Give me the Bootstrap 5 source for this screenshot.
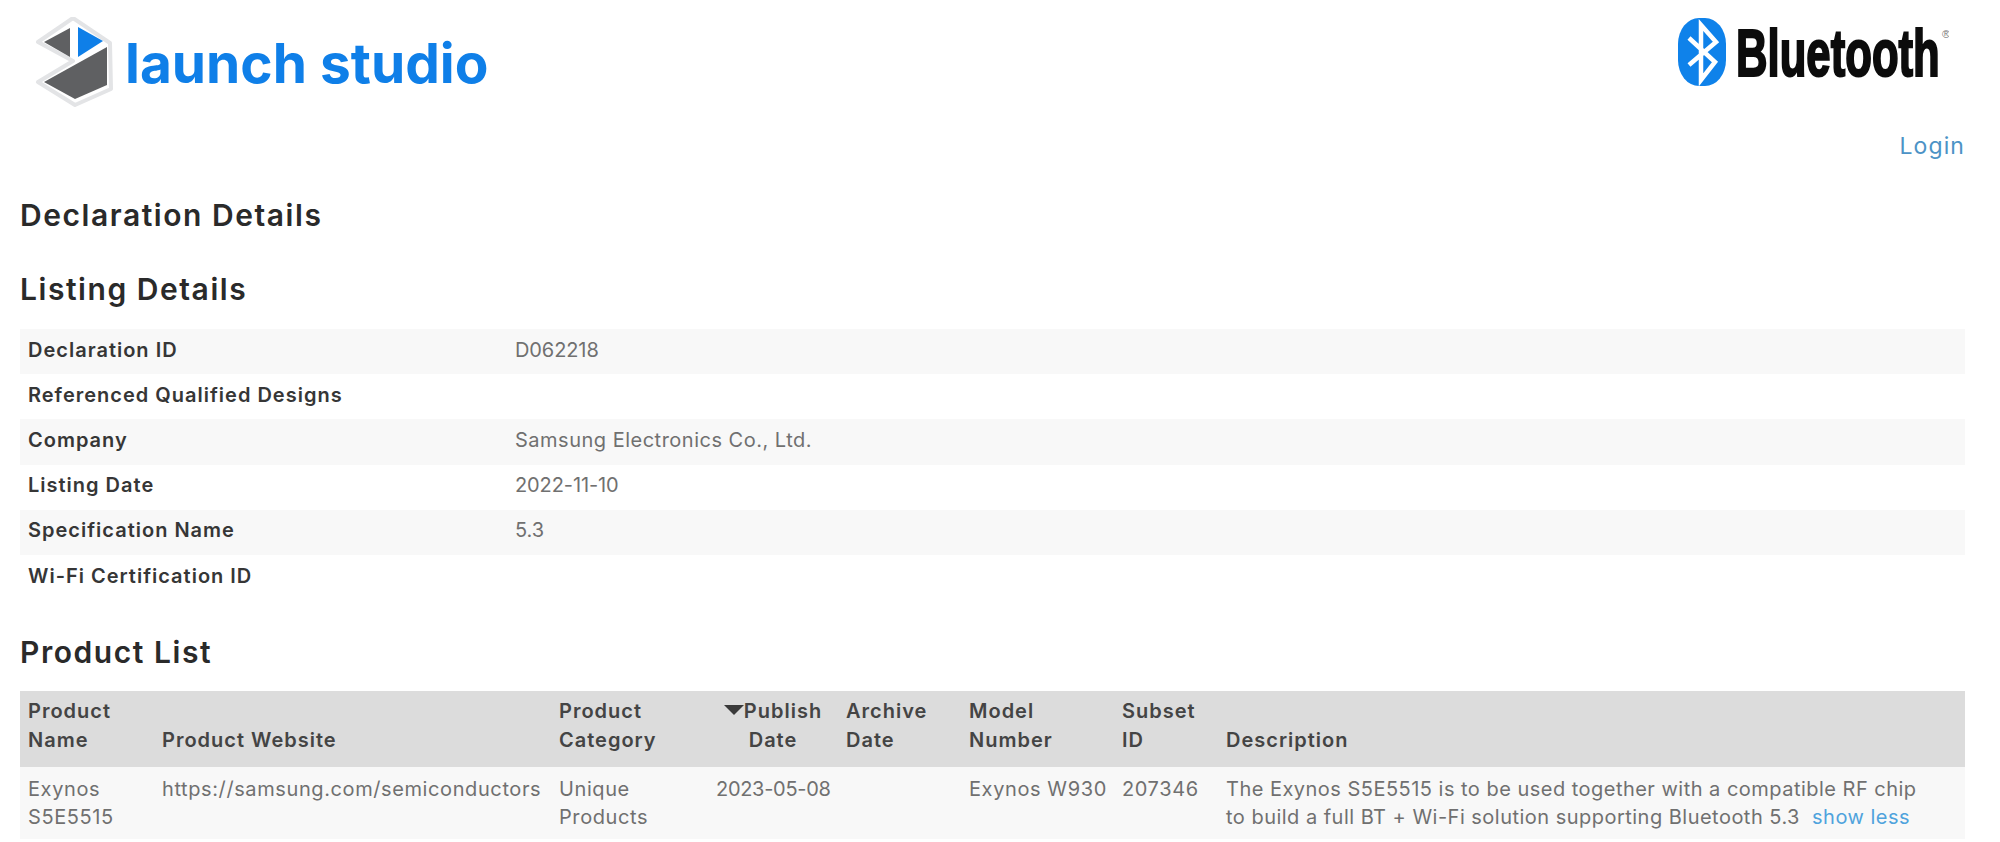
<!DOCTYPE html>
<html lang="en">
<head>
<meta charset="utf-8">
<title>Declaration Details</title>
<link href="https://cdn.jsdelivr.net/npm/bootstrap@5.3.0/dist/css/bootstrap.min.css" rel="stylesheet">
<style>
html,body{height:842px;overflow:hidden}
body{font-family:Inter,"Liberation Sans",sans-serif;background:#fff;color:#2b2b2b;font-size:20px}
.page-wrap{padding:0 35px 0 20px}
.top-bar{height:124px;padding:17px 16px 0 14px}
.brand-word{font-family:Inter,sans-serif;font-weight:700;font-size:55px;line-height:1;color:#0f7fe8;letter-spacing:0;margin-left:11px;margin-top:-2px}
.login-row{height:34px;line-height:44px}
.login-row a{color:#4c93c6;text-decoration:none;font-size:23px;letter-spacing:1.1px}
.sec-title{font-weight:600;font-size:30px;line-height:34px;color:#2a2a2a;margin:0;letter-spacing:1.55px}
.t1{margin-top:40px}
.t2{margin-top:40px;margin-bottom:23px}
.t3{margin-top:35px;margin-bottom:22px}
.info-table,.prod-table{width:100%;table-layout:fixed;margin:0;--bs-table-bg:transparent;--bs-table-color:#555}
.info-table td,.info-table th{height:45.2px;padding:0 8px 4px;border:0;vertical-align:middle;font-size:20px}
.info-table th{width:487px;font-weight:600;color:#363636;letter-spacing:1px}
.info-table td{color:#707070;letter-spacing:.5px}
.info-table td.num-cell{letter-spacing:-.1px}
.info-table tr:nth-child(odd) th,.info-table tr:nth-child(odd) td{background:#f8f8f8}
.prod-table thead th{background:#dcdcdc;color:#444;font-weight:600;vertical-align:bottom;border:0;padding:6px 8px 12px;line-height:29px;font-size:20px;letter-spacing:1px}
.prod-table tbody td{background:#f8f8f8;color:#707070;border:0;padding:8px 8px;line-height:28px;vertical-align:top;font-size:20px;letter-spacing:.6px}
.prod-table tbody td.desc-cell{padding-right:36px;letter-spacing:.48px}
.prod-table tbody td.num-cell{letter-spacing:-.3px}
.c1{width:134px}.c2{width:397px}.c3{width:157px}.c4{width:130px}.c5{width:123px}.c6{width:153px}.c7{width:104px}
.centered{text-align:center}
.more-link{color:#4fa3dd;text-decoration:none;margin-left:6px}
.sort-mark{display:inline-block;width:0;height:0;border-left:10px solid transparent;border-right:10px solid transparent;border-top:10px solid #3a3a3a;vertical-align:3px}
</style>
</head>
<body>
<div class="page-wrap">
  <header class="top-bar d-flex justify-content-between align-items-start">
    <div class="d-flex align-items-center">
      <svg width="80" height="94" viewBox="0 0 80 94" aria-hidden="true">
        <path d="M39 1 L76 26 L77 72 L41 88 L4 65 L39 44 L4 25 Z" fill="#fff" stroke="#e3e4e6" stroke-width="4" stroke-linejoin="round"/>
        <path d="M36 11 L36 40 L10 25 Z" fill="#5f6062"/>
        <path d="M44 10 L44 40 L69 24 Z" fill="#0f7fe8"/>
        <path d="M73 30 L73 68 L41 82 L10 65 Z" fill="#5f6062"/>
      </svg>
      <span class="brand-word">launch studio</span>
    </div>
    <svg width="272" height="80" viewBox="0 0 272 80" role="img" aria-label="Bluetooth">
      <rect x="1" y="1" width="48" height="68" rx="21" ry="26" fill="#0f82ea"/>
      <path d="M12 21 L38 45 L24 63 L24 8 L39 25 L12 48" fill="none" stroke="#fff" stroke-width="4.5"/>
      <text transform="translate(59 59) scale(.662 1)" font-family="Liberation Sans,sans-serif" font-weight="700" font-size="66" fill="#0c0c0c" stroke="#0c0c0c" stroke-width="2.2">Bluetooth</text>
      <text x="265" y="21" font-family="Liberation Sans,sans-serif" font-size="11" fill="#777">®</text>
    </svg>
  </header>
  <div class="login-row text-end"><a href="#">Login</a></div>
  <h2 class="sec-title t1">Declaration Details</h2>
  <h2 class="sec-title t2">Listing Details</h2>
  <table class="table info-table">
    <tbody>
      <tr><th>Declaration ID</th><td class="num-cell">D062218</td></tr>
      <tr><th>Referenced Qualified Designs</th><td></td></tr>
      <tr><th>Company</th><td>Samsung Electronics Co., Ltd.</td></tr>
      <tr><th>Listing Date</th><td class="num-cell">2022-11-10</td></tr>
      <tr><th>Specification Name</th><td class="num-cell">5.3</td></tr>
      <tr><th>Wi-Fi Certification ID</th><td></td></tr>
    </tbody>
  </table>
  <h2 class="sec-title t3">Product List</h2>
  <table class="table prod-table">
    <colgroup><col class="c1"><col class="c2"><col class="c3"><col class="c4"><col class="c5"><col class="c6"><col class="c7"><col></colgroup>
    <thead>
      <tr>
        <th>Product Name</th>
        <th>Product Website</th>
        <th>Product Category</th>
        <th class="centered"><span class="sort-mark"></span>Publish Date</th>
        <th>Archive Date</th>
        <th>Model Number</th>
        <th>Subset ID</th>
        <th>Description</th>
      </tr>
    </thead>
    <tbody>
      <tr>
        <td>Exynos S5E5515</td>
        <td class="text-nowrap">https://samsung.com/semiconductors</td>
        <td>Unique Products</td>
        <td class="centered text-nowrap num-cell">2023-05-08</td>
        <td></td>
        <td class="text-nowrap">Exynos W930</td>
        <td>207346</td>
        <td class="desc-cell">The Exynos S5E5515 is to be used together with a compatible RF chip to build a full BT + Wi-Fi solution supporting Bluetooth 5.3 <a class="more-link" href="#">show less</a></td>
      </tr>
    </tbody>
  </table>
</div>
</body>
</html>
